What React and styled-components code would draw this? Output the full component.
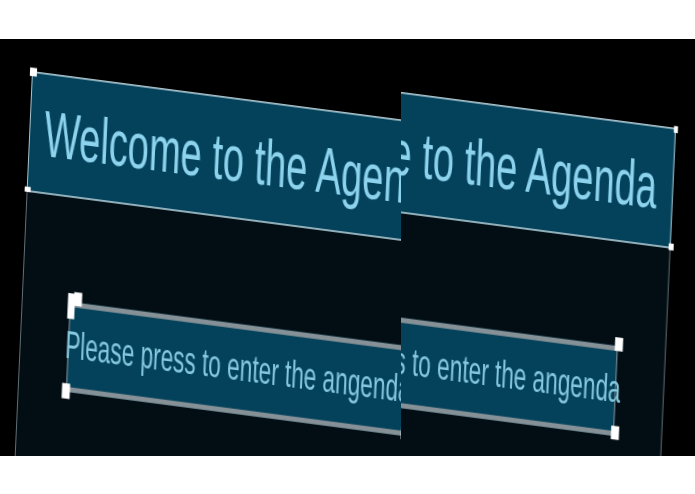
import React from "react";
import styled, { createGlobalStyle } from "styled-components";

const GlobalStyle = createGlobalStyle`
  html, body {
    margin: 0;
    background: #fff;
    font-family: "Liberation Sans", Arial, sans-serif;
  }
`;

const Stage = styled.div`
  display: flex;
  width: 695px;
  height: 417px;
  margin-top: 39px;
  background: #000;
`;

const Half = styled.div`
  position: relative;
  flex: 0 0 ${(props) => props.$width}px;
  overflow: hidden;
`;

// the slide is a warped picture, so it sits on its own free canvas
const Slide = styled.div`
  position: absolute;
  top: 32px;
  left: ${(props) => props.$left}px;
  display: flex;
  flex-direction: column;
  box-sizing: border-box;
  width: 434px;
  height: 262px;
  background: #020e13;
  border-left: 1px solid #5f6f76;
  border-right: 1px solid #5f6f76;
  transform-origin: 0 0;
  transform: matrix(1, 0.131, -0.0765, 1.7, 0, 0);
  filter: blur(0.35px);
`;

const Header = styled.div`
  display: flex;
  align-items: center;
  box-sizing: border-box;
  height: 71px;
  margin: 0 -1px;
  padding-left: 14px;
  background: #03425a;
  border: 1px solid #a9c3cc;
`;

const Title = styled.h1`
  margin: 0;
  font-size: 38px;
  font-weight: 400;
  line-height: 1;
  white-space: nowrap;
  color: #8dd3ee;
`;

const EnterButton = styled.div`
  position: relative;
  display: flex;
  align-items: center;
  justify-content: center;
  box-sizing: border-box;
  width: 338px;
  height: 53px;
  margin: 61px 0 0 47px;
  padding-left: 2px;
  background: #03425a;
  border-top: 3px solid #869197;
  border-bottom: 3px solid #869197;
  border-left: 1.5px solid #869197;
  border-right: 1.5px solid #869197;
`;

const ButtonLabel = styled.span`
  font-size: 22.6px;
  line-height: 1;
  white-space: nowrap;
  color: #86c8dd;
`;

const Handle = styled.i`
  position: absolute;
  left: ${(props) => props.$x}px;
  top: ${(props) => props.$y}px;
  width: ${(props) => props.$w}px;
  height: ${(props) => props.$h}px;
  background: #fff;
`;

const Scene = ({ left }) => (
  <Slide $left={left}>
    <Header>
      <Title>Welcome to the Agenda</Title>
    </Header>
    <Handle $x={-3} $y={-2} $w={7} $h={5} />
    <Handle $x={-3} $y={68} $w={6} $h={3} />
    <Handle $x={431} $y={-1} $w={4} $h={4} />
    <Handle $x={431} $y={68} $w={5} $h={4} />
    <EnterButton>
      <ButtonLabel>Please press to enter the angenda</ButtonLabel>
      <Handle $x={-3} $y={-8} $w={7} $h={15} />
      <Handle $x={3} $y={-9} $w={8} $h={8} />
      <Handle $x={-5} $y={45} $w={8} $h={9} />
      <Handle $x={334} $y={-8} $w={8} $h={8} />
      <Handle $x={334} $y={44} $w={8} $h={8} />
    </EnterButton>
  </Slide>
);

const App = () => (
  <>
    <GlobalStyle />
    <Stage>
      <Half $width={401}>
        <Scene left={32} />
      </Half>
      <Half $width={294}>
        <Scene left={-159} />
      </Half>
    </Stage>
  </>
);

export default App;
